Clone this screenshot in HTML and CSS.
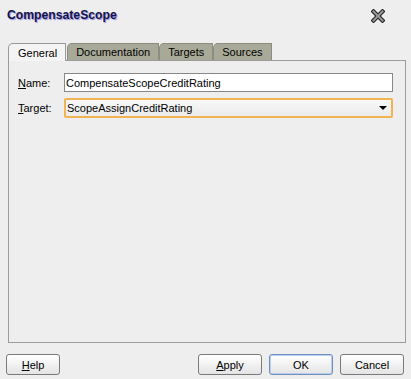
FILE: index.html
```html
<!DOCTYPE html>
<html lang="en">
<head>
  <meta charset="UTF-8">
  <title>CompensateScope</title>
  <link rel="stylesheet" href="styles.css">
</head>
<body>
  <div class="dialog">
    <div class="titlebar">
      <h1>CompensateScope</h1>
      <svg class="close" width="14" height="14" viewBox="0 0 14 14">
        <path d="M2.5 2.5 L11.5 11.5 M11.5 2.5 L2.5 11.5" stroke="#222" stroke-width="4.2" stroke-linecap="square"/>
        <path d="M2.5 2.5 L11.5 11.5 M11.5 2.5 L2.5 11.5" stroke="#9a9a9a" stroke-width="2" stroke-linecap="square"/>
      </svg>
    </div>

    <div class="tabs">
      <div class="tab active">General</div>
      <div class="tab">Documentation</div>
      <div class="tab">Targets</div>
      <div class="tab">Sources</div>
    </div>

    <div class="panel">
      <div class="row">
        <label><u>N</u>ame:</label>
        <input type="text" class="field" value="CompensateScopeCreditRating">
      </div>
      <div class="row">
        <label><u>T</u>arget:</label>
        <div class="select">
          <span>ScopeAssignCreditRating</span>
          <span class="arrow"></span>
        </div>
      </div>
    </div>

    <div class="footer">
      <button class="btn help"><u>H</u>elp</button>
      <div class="right">
        <button class="btn"><u>A</u>pply</button>
        <button class="btn ok">OK</button>
        <button class="btn">Cancel</button>
      </div>
    </div>
  </div>
</body>
</html>
```

FILE: styles.css
```css
body {
  margin: 0;
  background: #eeeeee;
  font-family: "Liberation Sans", Arial, sans-serif;
  font-size: 11px;
  color: #000;
}

.dialog {
  width: 411px;
  height: 379px;
}

.titlebar {
  display: flex;
  justify-content: space-between;
  align-items: center;
  padding: 7px 26px 0 7px;
  height: 16px;
}

.titlebar h1 {
  margin: 0;
  font-size: 12.2px;
  font-weight: bold;
  color: #141448;
  text-shadow: 1px 1px 1px #8c8ce0;
}

.close {
  display: block;
  margin-top: 2px;
}

.tabs {
  display: flex;
  padding: 20px 0 0 8px;
  height: 17px;
  align-items: flex-end;
}

.tab {
  height: 17px;
  line-height: 16px;
  padding: 0 8px;
  background: #a9a999;
  border: 1px solid #8c8c80;
  border-bottom: none;
  border-top-left-radius: 5px;
  box-sizing: border-box;
}

.tab.active {
  background: #f4f4f4;
  border-color: #999999;
  height: 18px;
  line-height: 18px;
  padding: 0 8px 0 9px;
  margin-right: 1px;
  position: relative;
  top: 1px;
}

.panel {
  margin-left: 8px;
  width: 398px;
  height: 283px;
  box-sizing: border-box;
  border: 1px solid #9c9c9c;
  padding: 12px 12px 0 9px;
}

.row {
  display: flex;
  align-items: center;
  margin-bottom: 6px;
}

.row label {
  width: 46px;
}

.field {
  width: 329px;
  height: 19px;
  box-sizing: border-box;
  border: 1px solid #888888;
  padding: 0 2px 0 1px;
  font-family: "Liberation Sans", Arial, sans-serif;
  font-size: 11px;
  margin: 0;
}

.select {
  width: 329px;
  height: 20px;
  box-sizing: border-box;
  border: 2px solid #f2b450;
  border-radius: 2px;
  background: linear-gradient(#f8f8f8, #ebebeb);
  display: flex;
  justify-content: space-between;
  align-items: center;
  padding: 0 4px 0 1px;
}

.arrow {
  width: 0;
  height: 0;
  border-left: 4px solid transparent;
  border-right: 4px solid transparent;
  border-top: 4px solid #000;
}

.footer {
  display: flex;
  justify-content: space-between;
  padding: 11px 7px 0 6px;
}

.right {
  display: flex;
  gap: 7px;
}

.btn {
  width: 64px;
  height: 21px;
  margin: 0;
  border: 1px solid #7a7a7a;
  border-radius: 3px;
  background: linear-gradient(#ffffff, #e4e4e4);
  font-family: "Liberation Sans", Arial, sans-serif;
  font-size: 11px;
  padding: 0;
}

.btn.help {
  width: 54px;
}

.btn.ok {
  border-color: #6f8fbf;
  box-shadow: inset 0 0 0 1px #b8cff0;
}
```
